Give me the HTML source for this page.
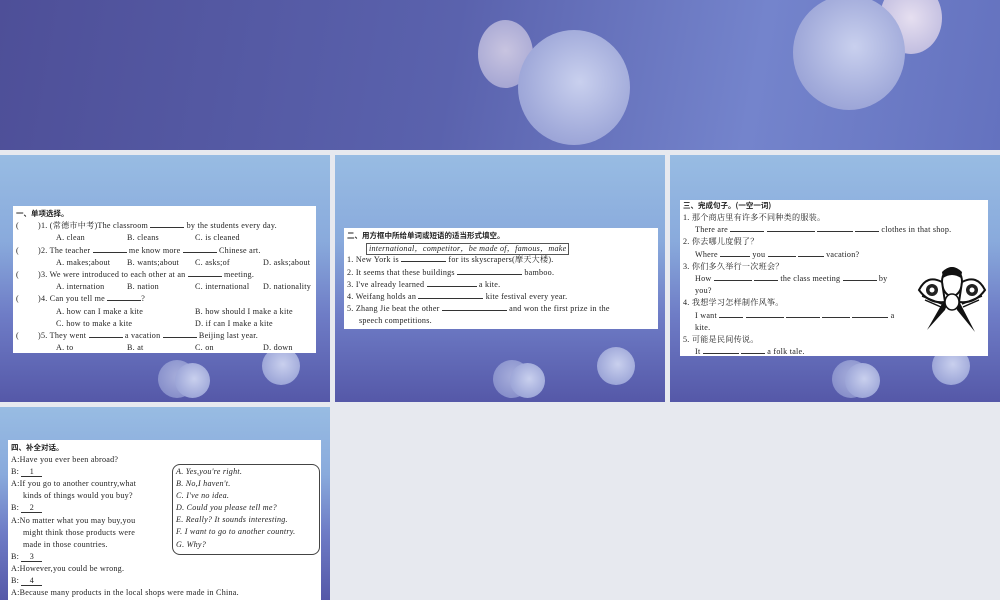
<!DOCTYPE html>
<html><head><meta charset="utf-8"><style>
*{margin:0;padding:0;box-sizing:border-box}
body{width:1000px;height:600px;background:#e7e9ef;position:relative;overflow:hidden;font-family:"Liberation Serif","Noto Serif CJK SC",serif;color:#222}
.banner{position:absolute;left:0;top:0;width:1000px;height:150px;background:linear-gradient(100deg,#4e4f98 0%,#5a62ad 45%,#7484cc 75%,#6472bf 100%);overflow:hidden}
.slide{position:absolute;width:330px;height:247px;overflow:hidden;background:linear-gradient(180deg,#98bce3 0%,#89aadc 35%,#6e7cc6 65%,#5558a8 100%)}
.ball{position:absolute;border-radius:50%;background:radial-gradient(circle at 55% 45%,#c9d0ee,#a3acdb 60%,#8c95cf)}
.box{position:absolute;background:#fff;font-size:8.1px;letter-spacing:.25px;line-height:12.2px;padding:2px 3px}
.box b{font-family:"Noto Sans CJK SC",sans-serif;font-weight:bold;font-size:7.5px;letter-spacing:0}
.r{white-space:nowrap;position:relative;height:12.2px}
.r span{position:absolute}
.u{display:inline-block;border-bottom:0.8px solid #333;height:8px;vertical-align:baseline}
</style></head><body>
<div class="banner">
<div class="ball" style="left:478px;top:20px;width:55px;height:68px;background:radial-gradient(circle at 50% 45%,#c8c4e0,#9d9fd0)"></div>
<div class="ball" style="left:518px;top:30px;width:112px;height:115px"></div>
<div class="ball" style="left:880px;top:-18px;width:62px;height:72px;background:radial-gradient(circle,#e6dff0,#b6b3db)"></div>
<div class="ball" style="left:793px;top:-5px;width:112px;height:115px"></div>
</div>

<div class="slide" style="left:0;top:155px">
<div class="ball" style="left:158px;top:205px;width:38px;height:38px;opacity:.7"></div>
<div class="ball" style="left:175px;top:208px;width:35px;height:35px"></div>
<div class="ball" style="left:262px;top:192px;width:38px;height:38px"></div>
<div class="box" style="left:13px;top:51px;width:303px;height:147px">
<b>一、单项选择。</b>
<div class="r"><span style="left:0">(</span><span style="left:22px">)1. (常德市中考)The classroom <span class="u" style="position:static;width:34px"></span> by the students every day.</span></div>
<div class="r"><span style="left:40px">A. clean</span><span style="left:111px">B. cleans</span><span style="left:179px">C. is cleaned</span></div>
<div class="r"><span style="left:0">(</span><span style="left:22px">)2. The teacher <span class="u" style="position:static;width:34px"></span> me know more <span class="u" style="position:static;width:34px"></span> Chinese art.</span></div>
<div class="r"><span style="left:40px">A. makes;about</span><span style="left:111px">B. wants;about</span><span style="left:179px">C. asks;of</span><span style="left:247px">D. asks;about</span></div>
<div class="r"><span style="left:0">(</span><span style="left:22px">)3. We were introduced to each other at an <span class="u" style="position:static;width:34px"></span> meeting.</span></div>
<div class="r"><span style="left:40px">A. internation</span><span style="left:111px">B. nation</span><span style="left:179px">C. international</span><span style="left:247px">D. nationality</span></div>
<div class="r"><span style="left:0">(</span><span style="left:22px">)4. Can you tell me <span class="u" style="position:static;width:34px"></span>?</span></div>
<div class="r"><span style="left:40px">A. how can I make a kite</span><span style="left:179px">B. how should I make a kite</span></div>
<div class="r"><span style="left:40px">C. how to make a kite</span><span style="left:179px">D. if can I make a kite</span></div>
<div class="r"><span style="left:0">(</span><span style="left:22px">)5. They went <span class="u" style="position:static;width:34px"></span> a vacation <span class="u" style="position:static;width:34px"></span> Beijing last year.</span></div>
<div class="r"><span style="left:40px">A. to</span><span style="left:111px">B. at</span><span style="left:179px">C. on</span><span style="left:247px">D. down</span></div>
</div></div>

<div class="slide" style="left:335px;top:155px">
<div class="ball" style="left:158px;top:205px;width:38px;height:38px;opacity:.7"></div>
<div class="ball" style="left:175px;top:208px;width:35px;height:35px"></div>
<div class="ball" style="left:262px;top:192px;width:38px;height:38px"></div>
<div class="box" style="left:9px;top:73px;width:314px;height:101px">
<b>二、用方框中所给单词或短语的适当形式填空。</b>
<div class="r"><span style="left:19px;top:1px;border:0.8px solid #555;padding:0 2px;line-height:10px;font-style:italic">international，competitor，be made of，famous，make</span></div>
<div class="r"><span style="left:0">1. New York is <span class="u" style="position:static;width:45px"></span> for its skyscrapers(摩天大楼).</span></div>
<div class="r"><span style="left:0">2. It seems that these buildings <span class="u" style="position:static;width:65px"></span> bamboo.</span></div>
<div class="r"><span style="left:0">3. I've already learned <span class="u" style="position:static;width:50px"></span> a kite.</span></div>
<div class="r"><span style="left:0">4. Weifang holds an <span class="u" style="position:static;width:65px"></span> kite festival every year.</span></div>
<div class="r"><span style="left:0">5. Zhang Jie beat the other <span class="u" style="position:static;width:65px"></span> and won the first prize in the</span></div>
<div class="r"><span style="left:12px">speech competitions.</span></div>
</div></div>

<div class="slide" style="left:670px;top:155px">
<div class="ball" style="left:162px;top:205px;width:38px;height:38px;opacity:.7"></div>
<div class="ball" style="left:175px;top:208px;width:35px;height:35px"></div>
<div class="ball" style="left:262px;top:192px;width:38px;height:38px"></div>
<div class="box" style="left:10px;top:45px;width:308px;height:156px;line-height:12px;padding-top:0">
<b>三、完成句子。(一空一词)</b>
<div class="r"><span style="left:0">1. 那个商店里有许多不同种类的服装。</span></div>
<div class="r"><span style="left:12px">There are <span class="u" style="position:static;width:34px"></span> <span class="u" style="position:static;width:48px"></span> <span class="u" style="position:static;width:36px"></span> <span class="u" style="position:static;width:24px"></span> clothes in that shop.</span></div>
<div class="r"><span style="left:0">2. 你去哪儿度假了？</span></div>
<div class="r"><span style="left:12px">Where <span class="u" style="position:static;width:30px"></span> you <span class="u" style="position:static;width:28px"></span> <span class="u" style="position:static;width:26px"></span> vacation?</span></div>
<div class="r"><span style="left:0">3. 你们多久举行一次班会？</span></div>
<div class="r"><span style="left:12px">How <span class="u" style="position:static;width:38px"></span> <span class="u" style="position:static;width:24px"></span> the class meeting <span class="u" style="position:static;width:34px"></span> by</span></div>
<div class="r"><span style="left:12px">you?</span></div>
<div class="r"><span style="left:0">4. 我想学习怎样制作风筝。</span></div>
<div class="r"><span style="left:12px">I want <span class="u" style="position:static;width:24px"></span> <span class="u" style="position:static;width:38px"></span> <span class="u" style="position:static;width:34px"></span> <span class="u" style="position:static;width:28px"></span> <span class="u" style="position:static;width:36px"></span> a</span></div>
<div class="r"><span style="left:12px">kite.</span></div>
<div class="r"><span style="left:0">5. 可能是民间传说。</span></div>
<div class="r"><span style="left:12px">It <span class="u" style="position:static;width:36px"></span> <span class="u" style="position:static;width:24px"></span> a folk tale.</span></div>
<svg style="position:absolute;left:237px;top:62px" width="70" height="72" viewBox="0 0 70 72">
<path d="M28 12 L58 70 L40 48 Z M42 12 L10 68 L28 48 Z" fill="#111"/>
<ellipse cx="35" cy="20" rx="10" ry="14" fill="#fff" stroke="#111" stroke-width="2"/>
<path d="M25 10 Q35 0 45 10 L44 16 Q35 10 26 16 Z" fill="#111"/>
<path d="M2 28 Q10 12 25 20 L28 40 Q12 42 2 28Z" fill="#fff" stroke="#111" stroke-width="2"/>
<path d="M68 28 Q60 12 45 20 L42 40 Q58 42 68 28Z" fill="#fff" stroke="#111" stroke-width="2"/>
<circle cx="15" cy="28" r="6" fill="#222"/><circle cx="55" cy="28" r="6" fill="#222"/>
<circle cx="15" cy="28" r="2.5" fill="#fff"/><circle cx="55" cy="28" r="2.5" fill="#fff"/>
<path d="M5 34 L25 42 M65 34 L45 42 M8 38 L24 45 M62 38 L46 45" stroke="#111" stroke-width="1.5"/>
<ellipse cx="35" cy="40" rx="7" ry="8" fill="#fff" stroke="#111" stroke-width="1.5"/>
</svg>
</div></div>

<div class="slide" style="left:0;top:407px;height:193px">
<div class="box" style="left:8px;top:33px;width:313px;height:160px;line-height:12.1px">
<b>四、补全对话。</b>
<div>A:Have you ever been abroad?</div>
<div>B: <span class="u" style="width:21px;text-align:center;height:10px;line-height:9px">1</span></div>
<div>A:If you go to another country,what</div>
<div style="padding-left:12px">kinds of things would you buy?</div>
<div>B: <span class="u" style="width:21px;text-align:center;height:10px;line-height:9px">2</span></div>
<div>A:No matter what you may buy,you</div>
<div style="padding-left:12px">might think those products were</div>
<div style="padding-left:12px">made in those countries.</div>
<div>B: <span class="u" style="width:21px;text-align:center;height:10px;line-height:9px">3</span></div>
<div>A:However,you could be wrong.</div>
<div>B: <span class="u" style="width:21px;text-align:center;height:10px;line-height:9px">4</span></div>
<div style="white-space:nowrap">A:Because many products in the local shops were made in China.</div>
<div style="position:absolute;left:164px;top:24px;width:148px;height:91px;border:0.9px solid #444;border-radius:8px;padding:1px 3px;font-style:italic">
<div>A. Yes,you're right.</div><div>B. No,I haven't.</div><div>C. I've no idea.</div><div>D. Could you please tell me?</div><div>E. Really? It sounds interesting.</div><div>F. I want to go to another country.</div><div>G. Why?</div>
</div>
</div></div>
</body></html>
